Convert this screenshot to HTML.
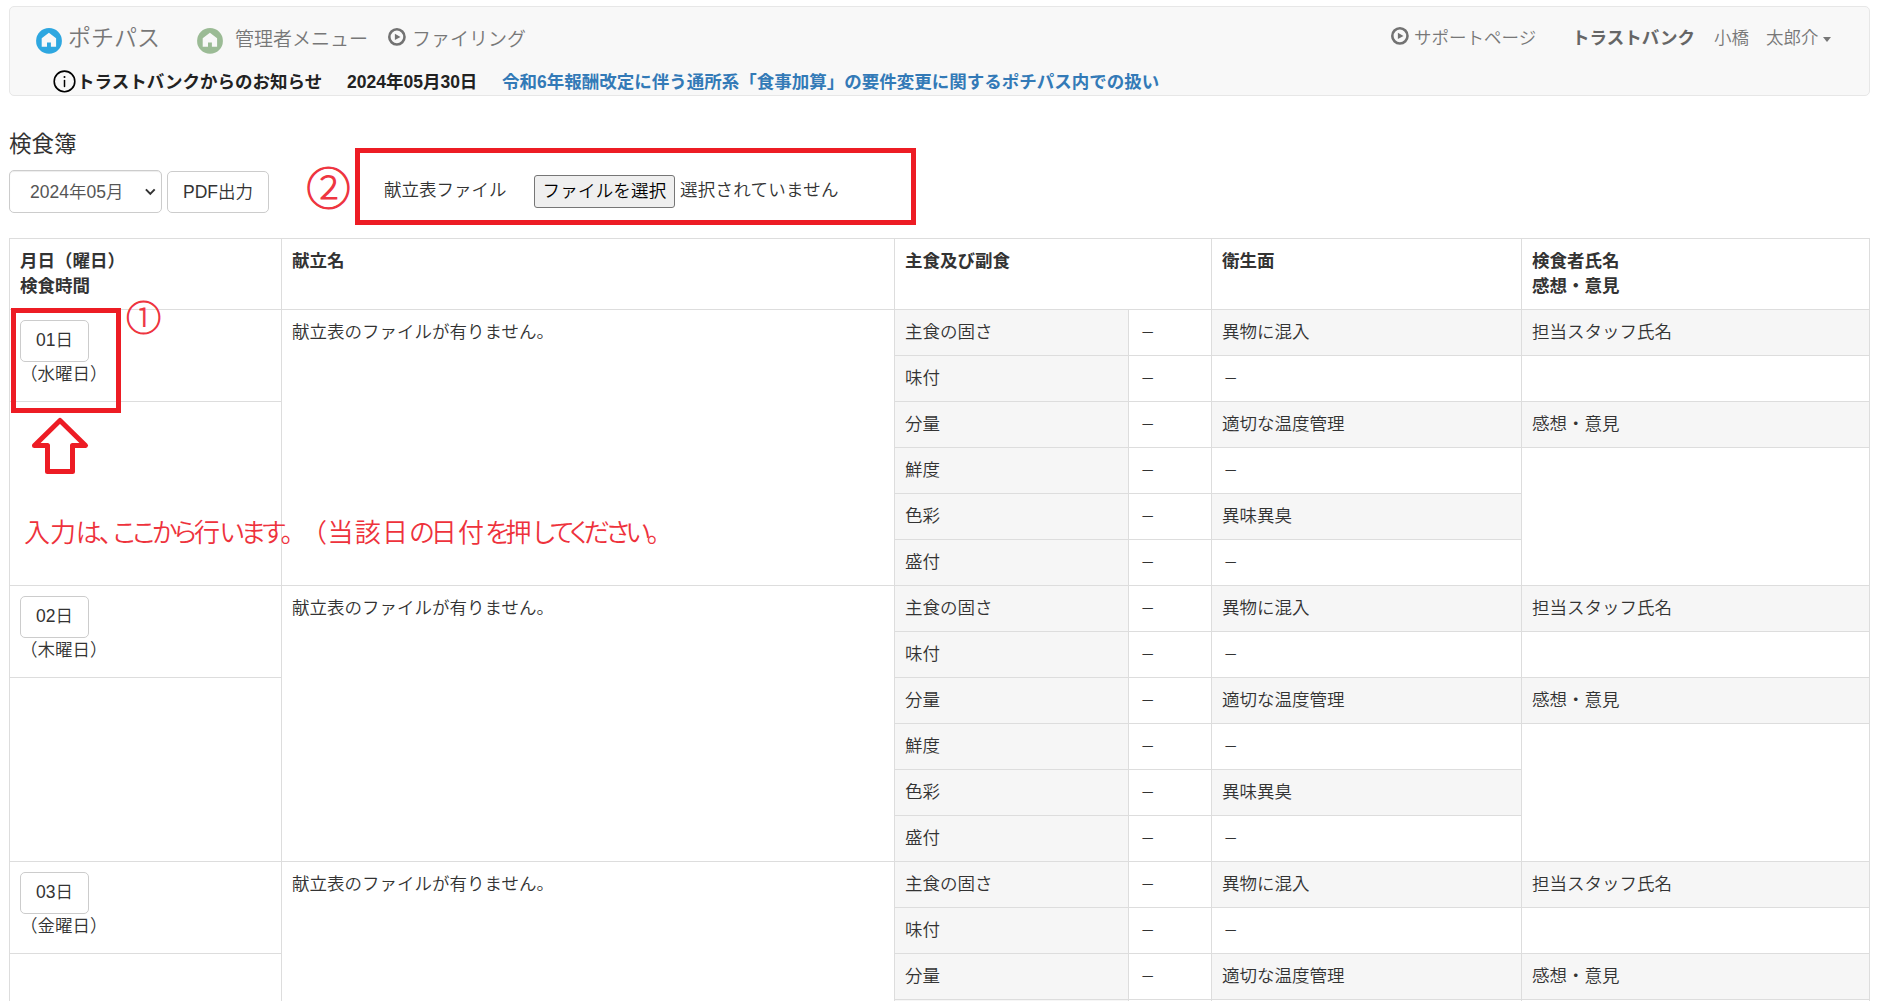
<!DOCTYPE html>
<html lang="ja">
<head>
<meta charset="utf-8">
<title>検食簿</title>
<style>
*{box-sizing:border-box;}
html,body{margin:0;padding:0;}
body{width:1880px;height:1001px;overflow:hidden;background:#fff;color:#333;
  font-family:"Liberation Sans","Noto Sans CJK JP",sans-serif;font-size:17.5px;line-height:25px;position:relative;font-weight:350;}
.abs{position:absolute;white-space:nowrap;}
/* navbar */
#nav{position:absolute;left:9px;top:6px;width:1861px;height:90px;background:#f8f8f8;border:1px solid #e7e7e7;border-radius:5px;}
.brand{left:68px;top:22px;font-size:23px;line-height:32px;color:#777;}
.nv{font-size:19px;line-height:30px;color:#777;top:24.5px;}
.nr{font-size:17.5px;line-height:25px;color:#777;top:25.5px;}
.info{top:69.5px;font-weight:bold;color:#222;line-height:25px;}
.info.link{color:#337ab7;}
/* controls */
h3{position:absolute;left:9px;top:129.5px;margin:0;font-size:22.5px;line-height:30px;font-weight:normal;color:#333;}
#sel{position:absolute;left:9px;top:170px;width:153px;height:43px;border:1px solid #ccc;border-radius:5px;background:#fff;box-shadow:inset 0 1px 1px rgba(0,0,0,.075);color:#555;}
#sel span{position:absolute;left:20px;top:9px;}
#pdf{position:absolute;left:167px;top:171px;width:102px;height:42px;border:1px solid #ccc;border-radius:5px;background:#fff;text-align:center;line-height:40px;color:#333;}
.red{position:absolute;border:5px solid #ed1c24;}
.circ{color:#ee3540;font-weight:100;-webkit-text-stroke:1.2px #ee3540;}
#fbtn{letter-spacing:.2px;position:absolute;left:534px;top:175px;width:141px;height:33px;border:1px solid #767676;border-radius:3px;background:#efefef;color:#000;text-align:center;line-height:31px;}
/* table */
table{position:absolute;left:9px;top:238px;width:1861px;border-collapse:separate;border-spacing:0;table-layout:fixed;border-right:1px solid #ddd;}
td,th{border-left:1px solid #ddd;border-top:1px solid #ddd;padding:10px 10px 10px 10px;vertical-align:top;text-align:left;height:46px;line-height:25px;overflow:hidden;}
th{height:71px;font-weight:bold;}
.g{background:#f6f6f6;}
.btn{display:block;width:69px;height:42px;border:1px solid #ccc;border-radius:5px;background:#fff;text-align:center;line-height:38.6px;margin:0;}
.day{padding-top:10px;}
.wd{display:block;padding-left:0;line-height:25px;}
.msg{top:512.7px;font-size:26px;line-height:40px;color:#ee323c;font-weight:350;font-feature-settings:"palt";}
.k{letter-spacing:-3.75px;}
.k2{letter-spacing:-3px;}
.d{display:inline-block;transform:scaleX(.82);position:relative;top:1px;}
</style>
</head>
<body>
<div id="nav"></div>
<svg class="abs" style="left:36px;top:28px" width="26" height="26" viewBox="0 0 26 26"><circle cx="13" cy="12.9" r="12.9" fill="#2ea7e0"/><path d="M12.9 4.75 L20.1 10.25 L20.1 18.8 L14.9 18.8 L14.9 14.4 L11 14.4 L11 18.8 L5.7 18.8 L5.7 10.25 Z" fill="#f8f8f8"/></svg>
<div class="abs brand">ポチパス</div>
<svg class="abs" style="left:197px;top:28px" width="26" height="26" viewBox="0 0 26 26"><circle cx="13" cy="12.9" r="12.9" fill="#9bbb95"/><path d="M12.9 4.75 L20.1 10.25 L20.1 18.8 L14.9 18.8 L14.9 14.4 L11 14.4 L11 18.8 L5.7 18.8 L5.7 10.25 Z" fill="#f8f8f8"/></svg>
<div class="abs nv" style="left:235px">管理者メニュー</div>
<svg class="abs" style="left:388.4px;top:28.4px" width="18" height="18" viewBox="0 0 18 18"><circle cx="8.9" cy="8.9" r="7.6" fill="none" stroke="#727272" stroke-width="2.6"/><path d="M6.9 5.7 L12.5 8.9 L6.9 12.1 Z" fill="#727272"/></svg>
<div class="abs nv" style="left:412px">ファイリング</div>
<svg class="abs" style="left:1391px;top:27px" width="18" height="18" viewBox="0 0 18 18"><circle cx="8.9" cy="8.9" r="7.6" fill="none" stroke="#727272" stroke-width="2.6"/><path d="M6.9 5.7 L12.5 8.9 L6.9 12.1 Z" fill="#727272"/></svg>
<div class="abs nr" style="left:1414px">サポートページ</div>
<div class="abs nr" style="left:1572px;font-weight:bold;color:#666">トラストバンク</div>
<div class="abs nr" style="left:1714px">小橋</div>
<div class="abs nr" style="left:1766px">太郎介</div>
<div class="abs" style="left:1823px;top:37px;width:0;height:0;border-left:4.5px solid transparent;border-right:4.5px solid transparent;border-top:5px solid #777"></div>

<svg class="abs" style="left:53px;top:70px" width="24" height="24" viewBox="0 0 24 24"><circle cx="11.5" cy="11.4" r="10.3" fill="none" stroke="#000" stroke-width="1.6"/><path d="M11.5 10.5 L11.5 16.4" stroke="#000" stroke-width="1.5" stroke-linecap="round" fill="none"/><circle cx="11.5" cy="6.95" r="1" fill="#000"/></svg>
<div class="abs info" style="left:77px">トラストバンクからのお知らせ</div>
<div class="abs info" style="left:347px">2024年05月30日</div>
<div class="abs info link" style="left:502px">令和6年報酬改定に伴う通所系「食事加算」の要件変更に関するポチパス内での扱い</div>

<h3>検食簿</h3>
<div id="sel"><span>2024年05月</span>
<svg class="abs" style="left:135px;top:17px" width="12" height="9" viewBox="0 0 12 9"><path d="M0.9 1.4 L5.3 5.9 L9.7 1.4" fill="none" stroke="#333" stroke-width="2"/></svg></div>
<div id="pdf">PDF出力</div>
<div class="abs circ" style="left:306.3px;top:160.2px;font-size:44.5px;line-height:60px">②</div>
<div class="red" style="left:355px;top:148px;width:561px;height:77px"></div>
<div class="abs" style="left:384px;top:178px">献立表ファイル</div>
<div id="fbtn">ファイルを選択</div>
<div class="abs" style="left:680px;top:177.6px;letter-spacing:.25px">選択されていません</div>

<table>
<colgroup><col style="width:272px"><col style="width:613px"><col style="width:234px"><col style="width:83px"><col style="width:310px"><col style="width:348px"></colgroup>
<thead><tr><th>月日（曜日）<br>検食時間</th><th>献立名</th><th colspan="2">主食及び副食</th><th>衛生面</th><th>検食者氏名<br>感想・意見</th></tr></thead>
<tbody>
<tr><td rowspan="2" class="day"><span class="btn">01日</span><span class="wd">（水曜日）</span></td><td rowspan="6">献立表のファイルが有りません。</td><td class="g">主食の固さ</td><td><span class="d">－</span></td><td class="g">異物に混入</td><td class="g">担当スタッフ氏名</td></tr>
<tr><td class="g">味付</td><td><span class="d">－</span></td><td><span class="d">－</span></td><td></td></tr>
<tr><td rowspan="4"></td><td class="g">分量</td><td><span class="d">－</span></td><td class="g">適切な温度管理</td><td class="g">感想・意見</td></tr>
<tr><td class="g">鮮度</td><td><span class="d">－</span></td><td><span class="d">－</span></td><td rowspan="3"></td></tr>
<tr><td class="g">色彩</td><td><span class="d">－</span></td><td class="g">異味異臭</td></tr>
<tr><td class="g">盛付</td><td><span class="d">－</span></td><td><span class="d">－</span></td></tr>

<tr><td rowspan="2" class="day"><span class="btn">02日</span><span class="wd">（木曜日）</span></td><td rowspan="6">献立表のファイルが有りません。</td><td class="g">主食の固さ</td><td><span class="d">－</span></td><td class="g">異物に混入</td><td class="g">担当スタッフ氏名</td></tr>
<tr><td class="g">味付</td><td><span class="d">－</span></td><td><span class="d">－</span></td><td></td></tr>
<tr><td rowspan="4"></td><td class="g">分量</td><td><span class="d">－</span></td><td class="g">適切な温度管理</td><td class="g">感想・意見</td></tr>
<tr><td class="g">鮮度</td><td><span class="d">－</span></td><td><span class="d">－</span></td><td rowspan="3"></td></tr>
<tr><td class="g">色彩</td><td><span class="d">－</span></td><td class="g">異味異臭</td></tr>
<tr><td class="g">盛付</td><td><span class="d">－</span></td><td><span class="d">－</span></td></tr>

<tr><td rowspan="2" class="day"><span class="btn">03日</span><span class="wd">（金曜日）</span></td><td rowspan="6">献立表のファイルが有りません。</td><td class="g">主食の固さ</td><td><span class="d">－</span></td><td class="g">異物に混入</td><td class="g">担当スタッフ氏名</td></tr>
<tr><td class="g">味付</td><td><span class="d">－</span></td><td><span class="d">－</span></td><td></td></tr>
<tr><td rowspan="4"></td><td class="g">分量</td><td><span class="d">－</span></td><td class="g">適切な温度管理</td><td class="g">感想・意見</td></tr>
<tr><td class="g">鮮度</td><td><span class="d">－</span></td><td><span class="d">－</span></td><td rowspan="3"></td></tr>
<tr><td class="g">色彩</td><td><span class="d">－</span></td><td class="g">異味異臭</td></tr>
<tr><td class="g">盛付</td><td><span class="d">－</span></td><td><span class="d">－</span></td></tr>
</tbody>
</table>

<div class="red" style="left:11px;top:308px;width:110px;height:105px"></div>
<div class="abs circ" style="left:126px;top:296.2px;font-size:35.3px;line-height:46px;-webkit-text-stroke-width:1px">①</div>
<svg class="abs" style="left:25px;top:412px" width="70" height="68" viewBox="25 412 70 68"><path d="M60 420.5 L85.5 445.5 L72.5 445.5 L72.5 471.5 L47.5 471.5 L47.5 445.5 L34.5 445.5 Z" fill="#fff" stroke="#ed1c24" stroke-width="5" stroke-linejoin="round"/></svg>
<div class="abs msg" style="left:24.1px;letter-spacing:-0.13px">入力<span class="k2">は<span style="letter-spacing:1.3px">、</span>ここから</span>行<span class="k2">います。</span></div>
<div class="abs msg" style="left:313px;letter-spacing:1.27px"><span style="letter-spacing:1.5px">（</span>当該日<span class="k">の</span>日付<span class="k">を</span>押<span class="k">してください。</span></div>
</body>
</html>
